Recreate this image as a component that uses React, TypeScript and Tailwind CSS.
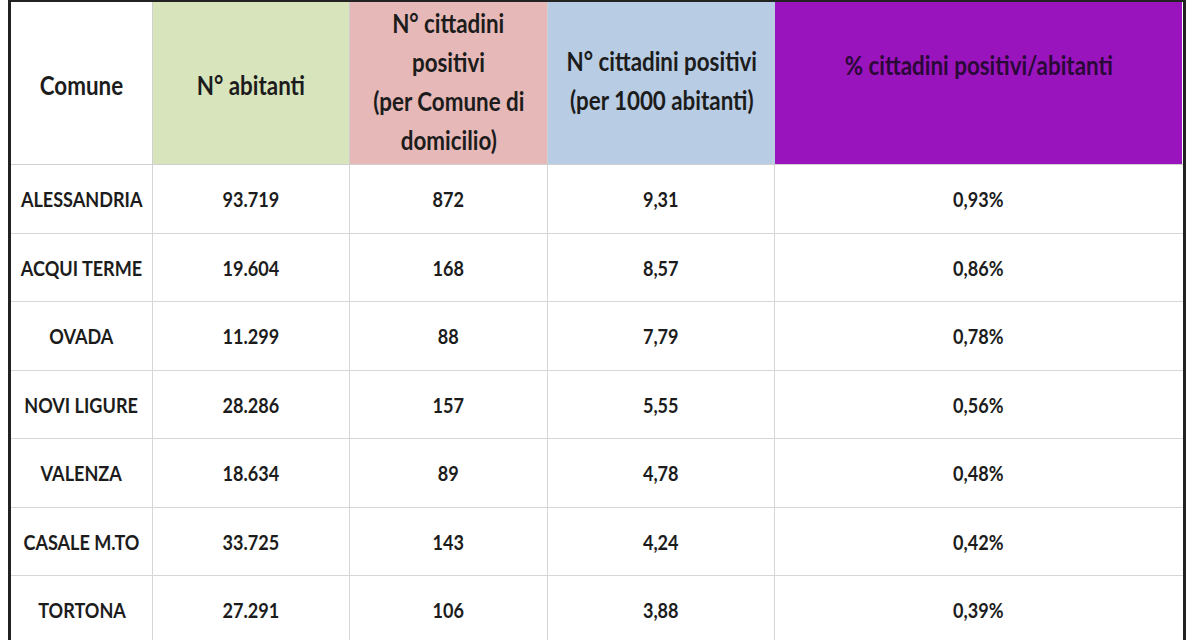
import React from 'react'

const rows = [
  { comune: 'ALESSANDRIA', abitanti: '93.719', positivi: '872', per1000: '9,31', perc: '0,93%' },
  { comune: 'ACQUI TERME', abitanti: '19.604', positivi: '168', per1000: '8,57', perc: '0,86%' },
  { comune: 'OVADA', abitanti: '11.299', positivi: '88', per1000: '7,79', perc: '0,78%' },
  { comune: 'NOVI LIGURE', abitanti: '28.286', positivi: '157', per1000: '5,55', perc: '0,56%' },
  { comune: 'VALENZA', abitanti: '18.634', positivi: '89', per1000: '4,78', perc: '0,48%' },
  { comune: 'CASALE M.TO', abitanti: '33.725', positivi: '143', per1000: '4,24', perc: '0,42%' },
  { comune: 'TORTONA', abitanti: '27.291', positivi: '106', per1000: '3,88', perc: '0,39%' },
]

const cols = 'grid grid-cols-[142px_197px_198px_227px_407px]'

function Txt({ children }: { children: React.ReactNode }) {
  return <span className="inline-block scale-x-[0.86] whitespace-nowrap">{children}</span>
}

export default function App() {
  return (
    <div className="w-[1200px] h-[640px] overflow-hidden bg-white font-['Lato',sans-serif] font-bold text-[#1c1c1c]">
      <div className="ml-[8px] w-[1178px] border-l-[3px] border-r-[3px] border-t-2 border-[#222]">
        {/* header */}
        <div className={`${cols} h-[163px] border-b border-[#d0d0d0] text-[26px] leading-[39px]`}>
          <div className="flex items-center justify-center border-r border-[#d0d0d0] pt-1">
            <Txt>Comune</Txt>
          </div>
          <div className="flex items-center justify-center border-r border-[#d0d0d0] bg-[#d8e4bc] pt-1">
            <Txt>N° abitanti</Txt>
          </div>
          <div className="flex flex-col items-center justify-center border-r border-[#d0d0d0] bg-[#e6b8b7] pb-[2px] text-center">
            <Txt>N° cittadini</Txt>
            <Txt>positivi</Txt>
            <Txt>(per Comune di</Txt>
            <Txt>domicilio)</Txt>
          </div>
          <div className="flex flex-col items-center justify-center bg-[#b8cce4] pb-1">
            <Txt>N° cittadini positivi</Txt>
            <Txt>(per 1000 abitanti)</Txt>
          </div>
          <div className="flex justify-center bg-[#9a14bd] pt-[44px] text-[#2a0838]">
            <Txt>% cittadini positivi/abitanti</Txt>
          </div>
        </div>
        {/* body */}
        {rows.map((r) => (
          <div key={r.comune} className={`${cols} h-[68.5px] border-b border-[#d6d6d6] text-[21px]`}>
            <div className="flex items-center justify-center border-r border-[#d6d6d6]">
              <Txt>{r.comune}</Txt>
            </div>
            <div className="flex items-center justify-center border-r border-[#d6d6d6]">
              <Txt>{r.abitanti}</Txt>
            </div>
            <div className="flex items-center justify-center border-r border-[#d6d6d6]">
              <Txt>{r.positivi}</Txt>
            </div>
            <div className="flex items-center justify-center border-r border-[#d6d6d6]">
              <Txt>{r.per1000}</Txt>
            </div>
            <div className="flex items-center justify-center">
              <Txt>{r.perc}</Txt>
            </div>
          </div>
        ))}
      </div>
    </div>
  )
}
